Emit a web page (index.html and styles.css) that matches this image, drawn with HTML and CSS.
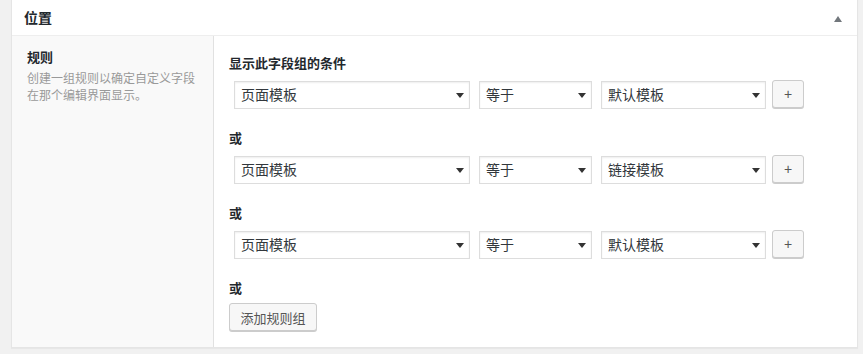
FILE: index.html
```html
<!DOCTYPE html>
<html lang="zh-CN">
<head>
    <meta charset="UTF-8">
    <title>位置</title>
    <link rel="stylesheet" href="styles.css">
</head>
<body>

    <div class="postbox">
        <div class="postbox-header">
            <h2>位置</h2>
            <span class="toggle-arrow"></span>
        </div>

        <div class="field-row">
            <div class="field-label">
                <label>规则</label>
                <p class="description">创建一组规则以确定自定义字段在那个编辑界面显示。</p>
            </div>

            <div class="field-input">
                <div class="rule-group">
                    <h4>显示此字段组的条件</h4>
                    <div class="rule">
                        <span class="select-wrap param">
                            <select><option>页面模板</option></select>
                        </span>
                        <span class="select-wrap operator">
                            <select><option>等于</option></select>
                        </span>
                        <span class="select-wrap value">
                            <select><option>默认模板</option></select>
                        </span>
                        <button class="button add-rule">+</button>
                    </div>
                </div>

                <div class="rule-group">
                    <h4>或</h4>
                    <div class="rule">
                        <span class="select-wrap param">
                            <select><option>页面模板</option></select>
                        </span>
                        <span class="select-wrap operator">
                            <select><option>等于</option></select>
                        </span>
                        <span class="select-wrap value">
                            <select><option>链接模板</option></select>
                        </span>
                        <button class="button add-rule">+</button>
                    </div>
                </div>

                <div class="rule-group">
                    <h4>或</h4>
                    <div class="rule">
                        <span class="select-wrap param">
                            <select><option>页面模板</option></select>
                        </span>
                        <span class="select-wrap operator">
                            <select><option>等于</option></select>
                        </span>
                        <span class="select-wrap value">
                            <select><option>默认模板</option></select>
                        </span>
                        <button class="button add-rule">+</button>
                    </div>
                </div>

                <h4 class="last-or">或</h4>
                <button class="button add-group">添加规则组</button>
            </div>
        </div>
    </div>

</body>
</html>
```

FILE: styles.css
```css
body {
    margin: 0;
    padding: 0;
    background: #f1f1f1;
    font-family: "Liberation Sans", "Noto Sans CJK SC", sans-serif;
    color: #32373c;
}
.postbox {
    margin: -1px 5px 5px 11px;
    background: #fff;
    border: 1px solid #e5e5e5;
    box-shadow: 0 1px 1px rgba(0, 0, 0, 0.04);
}
.postbox-header {
    height: 35px;
    display: flex;
    align-items: center;
    justify-content: space-between;
    padding: 0 15px 0 12px;
    border-bottom: 1px solid #eee;
}
.postbox-header h2 {
    margin: 0;
    font-size: 14px;
    font-weight: bold;
    color: #23282d;
    line-height: 20px;
}
.toggle-arrow {
    width: 0;
    height: 0;
    margin-top: 2px;
    border-left: 4px solid transparent;
    border-right: 4px solid transparent;
    border-bottom: 6px solid #72777c;
}
.field-row {
    display: flex;
}
.field-label {
    width: 174px;
    padding: 12px 12px 15px 15px;
    background: #f9f9f9;
    border-right: 1px solid #e1e1e1;
}
.field-label label {
    display: block;
    font-size: 13px;
    font-weight: bold;
    line-height: 20px;
    color: #23282d;
}
.field-label .description {
    margin: 3px 0 0;
    font-size: 12px;
    line-height: 17px;
    color: #999;
}
.field-input {
    flex: 1;
    padding: 18px 15px 16px 15px;
}
.rule-group {
    margin-bottom: 20px;
}
h4 {
    margin: 0;
    font-size: 13px;
    font-weight: bold;
    line-height: 20px;
    color: #23282d;
}
.rule {
    display: flex;
    align-items: flex-start;
    margin: 7px 0 0 5px;
}
.select-wrap {
    position: relative;
    display: block;
    margin-right: 9px;
}
.select-wrap.param { width: 236px; }
.select-wrap.operator { width: 113px; }
.select-wrap.value { width: 165px; margin-right: 6px; }
.select-wrap select {
    appearance: none;
    -webkit-appearance: none;
    width: 100%;
    height: 28px;
    margin: 0;
    padding: 0 20px 0 6px;
    border: 1px solid #ddd;
    border-radius: 0;
    background: #fff;
    box-shadow: inset 0 1px 2px rgba(0, 0, 0, 0.07);
    font-family: "Liberation Sans", "Noto Sans CJK SC", sans-serif;
    font-size: 14px;
    color: #32373c;
}
.select-wrap::after {
    content: "";
    position: absolute;
    right: 6px;
    top: 12px;
    border-left: 4px solid transparent;
    border-right: 4px solid transparent;
    border-top: 5px solid #333;
    pointer-events: none;
}
.button {
    height: 28px;
    padding: 0 10px;
    border: 1px solid #ccc;
    border-radius: 3px;
    background: #f7f7f7;
    box-shadow: 0 1px 0 #ccc;
    color: #555;
    font-family: "Liberation Sans", "Noto Sans CJK SC", sans-serif;
    font-size: 13px;
    cursor: pointer;
}
.button.add-rule {
    width: 32px;
    padding: 0;
    margin-top: -1px;
    font-size: 14px;
}
.last-or {
    margin-bottom: 4px;
}
.button.add-group {
    width: 88px;
    padding: 0;
}
```
